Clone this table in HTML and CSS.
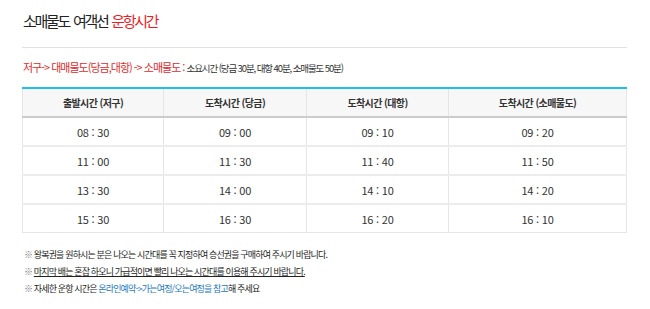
FILE: index.html
```html
<!DOCTYPE html>
<html lang="ko">
<head>
<meta charset="utf-8">
<link rel="stylesheet" href="styles.css">
</head>
<body>
<div class="page">
  <h1 class="title">소매물도 여객선 <span class="red">운항시간</span></h1>
  <p class="route"><span class="route-red">저구-&gt; 대매물도(당금,대항) -&gt; 소매물도 : </span>소요시간 (당금 30분, 대항 40분, 소매물도 50분)</p>
  <table class="schedule">
    <thead>
      <tr><th>출발시간 (저구)</th><th>도착시간 (당금)</th><th>도착시간 (대항)</th><th>도착시간 (소매물도)</th></tr>
    </thead>
    <tbody>
      <tr><td>08 : 30</td><td>09 : 00</td><td>09 : 10</td><td>09 : 20</td></tr>
      <tr><td>11 : 00</td><td>11 : 30</td><td>11 : 40</td><td>11 : 50</td></tr>
      <tr><td>13 : 30</td><td>14 : 00</td><td>14 : 10</td><td>14 : 20</td></tr>
      <tr><td>15 : 30</td><td>16 : 30</td><td>16 : 20</td><td>16 : 10</td></tr>
    </tbody>
  </table>
  <ul class="notes">
    <li><span class="mark">※</span> 왕복권을 원하시는 분은 나오는 시간대를 꼭 지정하여 승선권을 구매하여 주시기 바랍니다.</li>
    <li><span class="mark">※</span> <u>마지막 배는 혼잡 하오니 가급적이면 빨리 나오는 시간대를 이용해 주시기 바랍니다.</u></li>
    <li><span class="mark">※</span> 자세한 운항 시간은 <span class="blue">온라인예약-&gt;가는여정/오는여정을 참고</span>해 주세요</li>
  </ul>
</div>
</body>
</html>
```
FILE: styles.css
```css
html, body {
  margin: 0;
  padding: 0;
  background: #ffffff;
}
body {
  font-family: "Noto Sans CJK KR", "Noto Sans", sans-serif;
  color: #333333;
}
.page {
  width: 605px;
  padding: 0 0 0 22px;
}
.title {
  margin: 0;
  padding: 10px 0 0 1px;
  height: 48px;
  box-sizing: border-box;
  font-size: 15px;
  font-weight: 400;
  line-height: 22px;
  letter-spacing: -2.3px;
  word-spacing: 2px;
  color: #222222;
  border-bottom: 1px solid #e1e1e1;
}
.red {
  color: #ee1c25;
}
.route {
  margin: 0;
  padding: 12px 0 0 1px;
  height: 39px;
  box-sizing: border-box;
  font-size: 9.5px;
  line-height: 15px;
  letter-spacing: -1.1px;
  color: #333333;
}
.route-red {
  color: #dd2b2b;
  font-size: 11px;
  letter-spacing: -1px;
}
.schedule {
  width: 605px;
  border-collapse: collapse;
  border-top: 2px solid #1ec0ee;
  table-layout: fixed;
}
.schedule th {
  background: #f7f7f7;
  height: 27px;
  font-size: 10px;
  font-weight: 700;
  letter-spacing: -0.6px;
  color: #333333;
  border-bottom: 2px solid #cccccc;
  border-left: 1px solid #e6e6e6;
  border-right: 1px solid #e6e6e6;
  padding: 0;
}
.schedule td {
  height: 27px;
  text-align: center;
  font-size: 11px;
  letter-spacing: -0.2px;
  color: #333333;
  border: 1px solid #e6e6e6;
  border-top: 2px solid #ececec;
  padding: 0;
}
.schedule th:first-child, .schedule td:first-child { width: 140px; }
.schedule th:nth-child(2), .schedule td:nth-child(2) { width: 142px; }
.schedule th:nth-child(3), .schedule td:nth-child(3) { width: 141px; }
.notes {
  list-style: none;
  margin: 0;
  padding: 13px 0 0 2px;
  font-size: 9px;
  line-height: 17px;
  letter-spacing: -0.85px;
  color: #222222;
}
.mark {
  color: #777777;
}
.blue {
  color: #1b78c4;
}
```
